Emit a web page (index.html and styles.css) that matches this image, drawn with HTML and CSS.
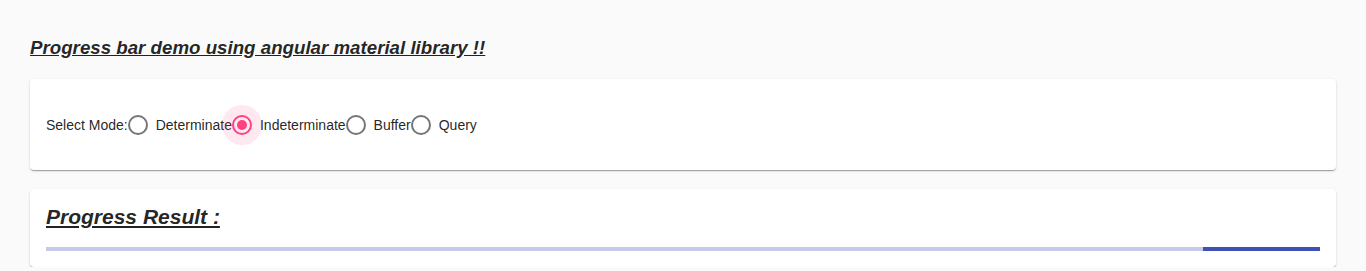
FILE: index.html
```html
<!DOCTYPE html>
<html lang="en">
<head>
    <meta charset="UTF-8">
    <title>Progress bar demo</title>
    <link rel="stylesheet" href="styles.css">
</head>
<body>
    <div class="page">
        <h1 class="title">Progress bar demo using angular material library !!</h1>
        <div class="card mode-card">
            <div class="radio-group">
                <span class="group-label">Select Mode:</span>
                <label class="radio"><span class="radio-circle"></span><span class="radio-text">Determinate</span></label>
                <label class="radio checked"><span class="radio-circle"><span class="ripple"></span><span class="dot"></span></span><span class="radio-text">Indeterminate</span></label>
                <label class="radio"><span class="radio-circle"></span><span class="radio-text">Buffer</span></label>
                <label class="radio"><span class="radio-circle"></span><span class="radio-text">Query</span></label>
            </div>
        </div>
        <div class="card result-card">
            <h2 class="result-title">Progress Result :</h2>
            <div class="progress">
                <div class="progress-bar"></div>
            </div>
        </div>
    </div>
</body>
</html>
```

FILE: styles.css
```css
body {
    margin: 0;
    background-color: #fafafa;
    font-family: "Liberation Sans", Arial, sans-serif;
    color: rgba(0, 0, 0, 0.87);
}
.page {
    padding: 37px 30px 0 30px;
}
.title {
    margin: 0 0 20px 0;
    font-size: 18.72px;
    font-weight: bold;
    font-style: italic;
    text-decoration: underline;
    line-height: 22px;
}
.card {
    background: white;
    border-radius: 4px;
    box-shadow: 0 2px 1px -1px rgba(0, 0, 0, 0.2), 0 1px 1px 0 rgba(0, 0, 0, 0.14), 0 1px 3px 0 rgba(0, 0, 0, 0.12);
    padding: 16px;
}
.mode-card {
    height: 59px;
    display: flex;
    align-items: center;
    margin-bottom: 19px;
}
.radio-group {
    display: flex;
    align-items: center;
    font-size: 14px;
}
.radio {
    display: flex;
    align-items: center;
}
.radio-circle {
    position: relative;
    width: 16px;
    height: 16px;
    border: 2px solid rgba(0, 0, 0, 0.54);
    border-radius: 50%;
}
.radio-text {
    padding-left: 8px;
}
.checked .radio-circle {
    border-color: #ff4081;
}
.ripple {
    position: absolute;
    left: -12px;
    top: -12px;
    width: 40px;
    height: 40px;
    border-radius: 50%;
    background: rgba(255, 64, 129, 0.12);
}
.dot {
    position: absolute;
    left: 3px;
    top: 3px;
    width: 10px;
    height: 10px;
    border-radius: 50%;
    background: #ff4081;
}
.result-card {
    padding-top: 16px;
    padding-bottom: 16px;
}
.result-title {
    margin: 0 0 18px 0;
    font-size: 21px;
    font-weight: bold;
    font-style: italic;
    text-decoration: underline;
    line-height: 24px;
}
.progress {
    position: relative;
    height: 4px;
    background: #c5cae9;
    overflow: hidden;
}
.progress-bar {
    position: absolute;
    right: 0;
    top: 0;
    width: 117px;
    height: 4px;
    background: #3f51b5;
}
```
